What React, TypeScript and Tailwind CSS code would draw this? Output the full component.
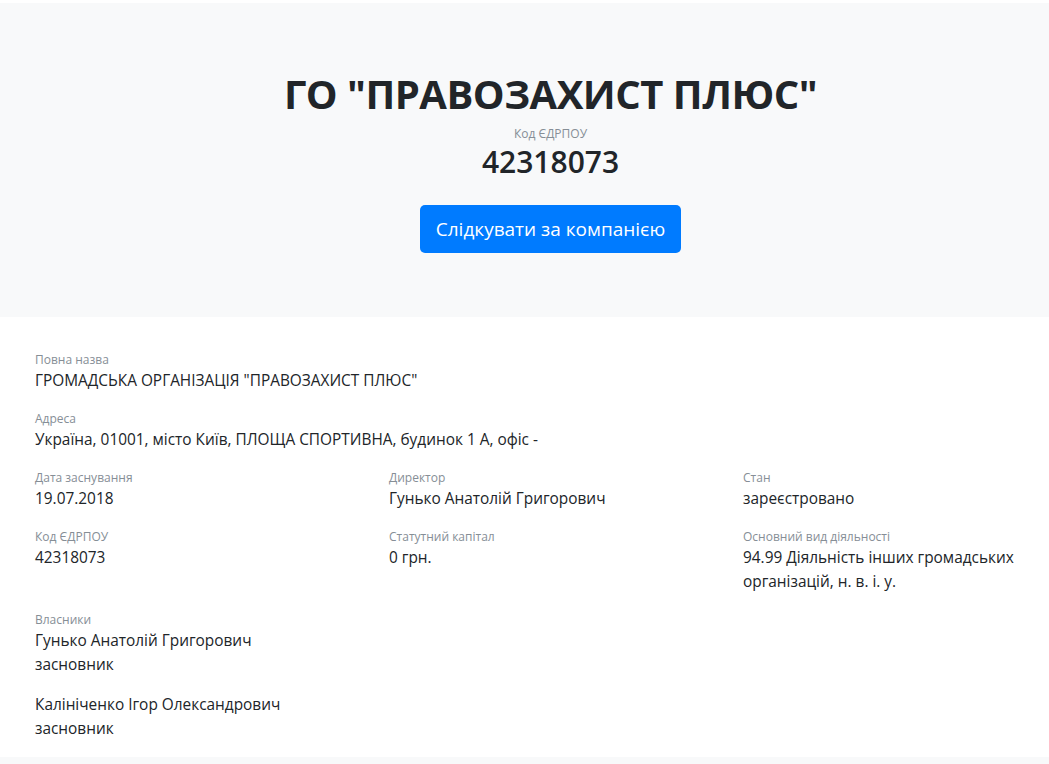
import React from "react";

const font = { fontFamily: '"Open Sans", "Noto Sans", sans-serif' };

function Field({ label, children }: { label: string; children: React.ReactNode }) {
  return (
    <div className="mb-4">
      <div className="text-[12px] leading-[19px] text-[#868e96]">{label}</div>
      <div className="text-[15.4px] leading-[24px] text-[#212529]">{children}</div>
    </div>
  );
}

export default function App() {
  return (
    <div className="min-h-[764px] w-full overflow-hidden bg-white pt-[3px]" style={font}>
      <div className="w-[1101px]">
        <section className="flex flex-col items-center bg-[#f8f9fa] pb-16 pt-16 text-[#212529]">
          <h1 className="text-[40px] font-bold leading-[53px] tracking-[-0.5px]">ГО "ПРАВОЗАХИСТ ПЛЮС"</h1>
          <div className="mt-[6px] text-[12px] leading-[16px] text-[#868e96]">Код ЄДРПОУ</div>
          <div className="mt-[3px] text-[30px] font-semibold leading-[34px]">42318073</div>
          <button className="mt-[26px] h-[48px] rounded-[5px] bg-[#007bff] px-4 text-[19px] text-white">
            Слідкувати за компанією
          </button>
        </section>
        <section className="px-[35px] pt-[33px] pb-0">
          <Field label="Повна назва">ГРОМАДСЬКА ОРГАНІЗАЦІЯ "ПРАВОЗАХИСТ ПЛЮС"</Field>
          <Field label="Адреса">Україна, 01001, місто Київ, ПЛОЩА СПОРТИВНА, будинок 1 А, офіс -</Field>
          <div className="grid grid-cols-[354px_354px_324px]">
            <Field label="Дата заснування">19.07.2018</Field>
            <Field label="Директор">Гунько Анатолій Григорович</Field>
            <Field label="Стан">зареєстровано</Field>
            <Field label="Код ЄДРПОУ">42318073</Field>
            <Field label="Статутний капітал">0 грн.</Field>
            <Field label="Основний вид діяльності">94.99 Діяльність інших громадських організацій, н. в. і. у.</Field>
          </div>
          <div className="mb-4">
            <div className="text-[12px] leading-[19px] text-[#868e96]">Власники</div>
            <div className="mb-4 text-[15.4px] leading-[24px] text-[#212529]">
              <div>Гунько Анатолій Григорович</div>
              <div>засновник</div>
            </div>
            <div className="text-[15.4px] leading-[24px] text-[#212529]">
              <div>Калініченко Ігор Олександрович</div>
              <div>засновник</div>
            </div>
          </div>
        </section>
        <footer className="h-[40px] bg-[#f8f9fa]" />
      </div>
    </div>
  );
}
